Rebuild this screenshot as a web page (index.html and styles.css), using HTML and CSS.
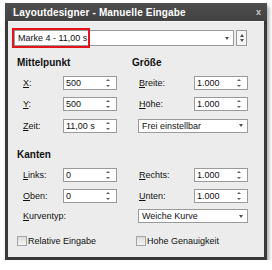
FILE: index.html
```html
<!DOCTYPE html>
<html lang="de">
<head>
    <meta charset="UTF-8">
    <title>Layoutdesigner - Manuelle Eingabe</title>
    <link rel="stylesheet" href="styles.css">
</head>
<body>
    <div class="window">
        <div class="titlebar">
            <span class="title">Layoutdesigner - Manuelle Eingabe</span>
            <span class="close">x</span>
        </div>

        <div class="content">
            <!-- Marker selection -->
            <div class="top-row">
                <div class="combo main">
                    <span>Marke 4 - 11,00 s</span>
                    <span class="arrow"></span>
                    <div class="highlight"></div>
                </div>
                <div class="spin-button">
                    <span class="up"></span>
                    <span class="down"></span>
                </div>
            </div>

            <div class="grid">
                <!-- Mittelpunkt / Größe -->
                <h3 class="head">Mittelpunkt</h3>
                <h3 class="head">Größe</h3>

                <div class="row">
                    <label class="lbl"><u>X</u>:</label>
                    <div class="field"><span>500</span><span class="spin"></span></div>
                </div>
                <div class="row right">
                    <label class="lbl"><u>B</u>reite:</label>
                    <div class="field"><span>1.000</span><span class="spin"></span></div>
                </div>

                <div class="row">
                    <label class="lbl"><u>Y</u>:</label>
                    <div class="field"><span>500</span><span class="spin"></span></div>
                </div>
                <div class="row right">
                    <label class="lbl"><u>H</u>öhe:</label>
                    <div class="field"><span>1.000</span><span class="spin"></span></div>
                </div>

                <div class="row">
                    <label class="lbl"><u>Z</u>eit:</label>
                    <div class="field"><span>11,00 s</span><span class="spin"></span></div>
                </div>
                <div class="row right">
                    <div class="combo"><span>Frei einstellbar</span><span class="arrow"></span></div>
                </div>

                <!-- Kanten -->
                <h3 class="head section">Kanten</h3>
                <div></div>

                <div class="row">
                    <label class="lbl"><u>L</u>inks:</label>
                    <div class="field"><span>0</span><span class="spin"></span></div>
                </div>
                <div class="row right">
                    <label class="lbl"><u>R</u>echts:</label>
                    <div class="field"><span>1.000</span><span class="spin"></span></div>
                </div>

                <div class="row">
                    <label class="lbl"><u>O</u>ben:</label>
                    <div class="field"><span>0</span><span class="spin"></span></div>
                </div>
                <div class="row right">
                    <label class="lbl"><u>U</u>nten:</label>
                    <div class="field"><span>1.000</span><span class="spin"></span></div>
                </div>

                <div class="row">
                    <label class="lbl wide-lbl"><u>K</u>urventyp:</label>
                </div>
                <div class="row right">
                    <div class="combo"><span>Weiche Kurve</span><span class="arrow"></span></div>
                </div>

                <!-- Options -->
                <label class="check"><span class="box"></span>Relative Eingabe</label>
                <label class="check right-check"><span class="box"></span>Hohe Genauigkeit</label>
            </div>
        </div>
    </div>
</body>
</html>
```

FILE: styles.css
```css
body {
    margin: 0;
    background: #ffffff;
    font-family: "Liberation Sans", Arial, sans-serif;
    font-size: 9px;
    color: #111111;
}

.window {
    margin: 3px 0 0 5px;
    width: 256px;
    height: 254px;
    border: 3px solid #383838;
    border-top: none;
    background: #ececec;
    box-shadow: 2px 3px 4px rgba(0, 0, 0, 0.35);
}

.titlebar {
    height: 18px;
    margin: 0 -3px;
    padding: 0 6px 0 8px;
    background: linear-gradient(#4e4e4e, #424242);
    color: #ffffff;
    display: flex;
    align-items: center;
    justify-content: space-between;
}

.title {
    font-weight: bold;
    font-size: 10px;
    letter-spacing: 0.15px;
}

.close {
    font-weight: bold;
    font-size: 9px;
    color: #c8c8c8;
}

.content {
    padding: 8px 0 0 6px;
    border-top: 1px solid #f6f6f6;
}

.top-row {
    display: flex;
    gap: 2px;
}

.combo {
    position: relative;
    height: 14px;
    box-sizing: border-box;
    background: #ffffff;
    border: 1px solid #9a9a9a;
    display: flex;
    align-items: center;
    justify-content: space-between;
    padding: 0 4px 0 3px;
}

.combo.main {
    width: 220px;
    height: 16px;
}

.highlight {
    position: absolute;
    left: -3px;
    top: -3px;
    width: 74px;
    height: 16px;
    border: 2px solid #e3141b;
}

.arrow {
    width: 0;
    height: 0;
    border-left: 2.5px solid transparent;
    border-right: 2.5px solid transparent;
    border-top: 3px solid #505050;
}

.spin-button {
    width: 11px;
    height: 16px;
    box-sizing: border-box;
    border: 1px solid #9a9a9a;
    background: #f6f6f6;
    display: flex;
    flex-direction: column;
    align-items: center;
    justify-content: center;
    gap: 2px;
}

.up,
.down {
    width: 0;
    height: 0;
    border-left: 2.5px solid transparent;
    border-right: 2.5px solid transparent;
}

.up {
    border-bottom: 3px solid #505050;
}

.down {
    border-top: 3px solid #505050;
}

.grid {
    display: grid;
    grid-template-columns: 115px 116px;
    grid-template-rows: 20px 21px 22px 21px 28px 21px 21px 20px 30px;
    align-items: center;
    margin: 6px 0 0 3px;
}

.head {
    margin: 0;
    font-size: 10px;
    font-weight: bold;
}

.head.section {
    margin-top: 8px;
}

.row {
    display: flex;
    align-items: center;
    padding-left: 6px;
}

.row.right {
    padding-left: 7px;
}

.lbl {
    width: 40px;
}

.row.right .lbl {
    width: 55px;
}

.wide-lbl {
    width: auto;
}

.field {
    width: 54px;
    height: 14px;
    box-sizing: border-box;
    background: #ffffff;
    border: 1px solid #9a9a9a;
    display: flex;
    align-items: center;
    justify-content: space-between;
    padding: 0 6px 0 2px;
}

.row.right .combo {
    width: 110px;
    margin-left: -1px;
}

.spin {
    width: 5px;
    height: 8px;
    display: flex;
    flex-direction: column;
    justify-content: space-between;
    align-items: center;
}

.spin::before,
.spin::after {
    content: "";
    border-left: 2px solid transparent;
    border-right: 2px solid transparent;
}

.spin::before {
    border-bottom: 2.5px solid #606060;
}

.spin::after {
    border-top: 2.5px solid #606060;
}

.check {
    display: flex;
    align-items: center;
    gap: 1px;
}

.right-check {
    padding-left: 4px;
}

.box {
    width: 8px;
    height: 8px;
    border: 1px solid #a4a4a4;
    background: linear-gradient(#dcdcdc, #f4f4f4);
}
```
